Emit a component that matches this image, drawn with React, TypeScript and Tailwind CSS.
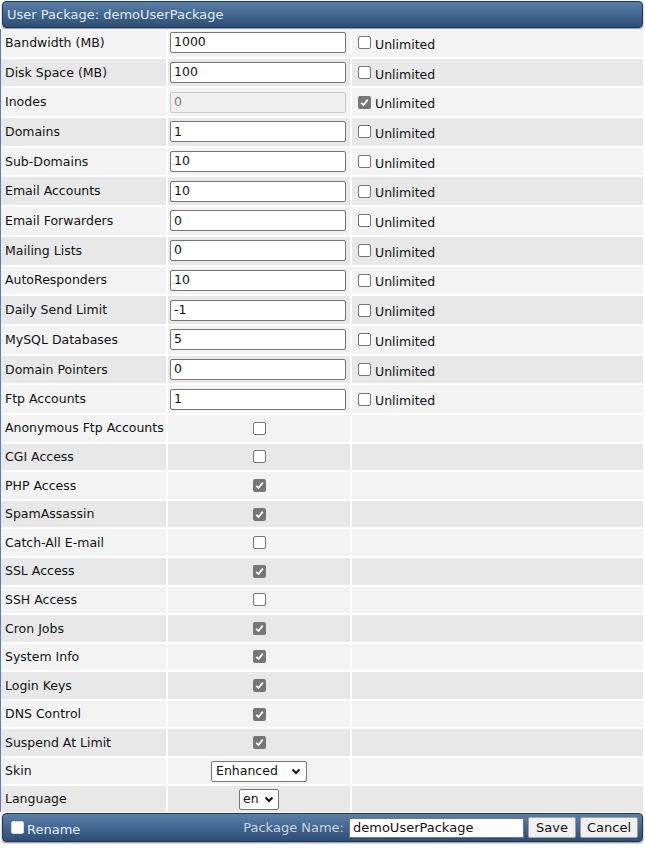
import React from 'react';

const limits: { label: string; value: string; unlimited?: boolean }[] = [
  { label: 'Bandwidth (MB)', value: '1000' },
  { label: 'Disk Space (MB)', value: '100' },
  { label: 'Inodes', value: '0', unlimited: true },
  { label: 'Domains', value: '1' },
  { label: 'Sub-Domains', value: '10' },
  { label: 'Email Accounts', value: '10' },
  { label: 'Email Forwarders', value: '0' },
  { label: 'Mailing Lists', value: '0' },
  { label: 'AutoResponders', value: '10' },
  { label: 'Daily Send Limit', value: '-1' },
  { label: 'MySQL Databases', value: '5' },
  { label: 'Domain Pointers', value: '0' },
  { label: 'Ftp Accounts', value: '1' },
];

const flags: [string, boolean][] = [
  ['Anonymous Ftp Accounts', false],
  ['CGI Access', false],
  ['PHP Access', true],
  ['SpamAssassin', true],
  ['Catch-All E-mail', false],
  ['SSL Access', true],
  ['SSH Access', false],
  ['Cron Jobs', true],
  ['System Info', true],
  ['Login Keys', true],
  ['DNS Control', true],
  ['Suspend At Limit', true],
];

const Box = ({ checked, dark }: { checked?: boolean; dark?: boolean }) =>
  checked ? (
    <span className="inline-flex w-[13px] h-[13px] rounded-[2px] bg-[#767676] items-center justify-center shrink-0">
      <svg width="9" height="9" viewBox="0 0 9 9">
        <path d="M1.2 4.8 L3.5 7 L7.8 1.6" fill="none" stroke="#fff" strokeWidth="1.8" />
      </svg>
    </span>
  ) : (
    <span
      className={`inline-block w-[13px] h-[13px] rounded-[2px] border shrink-0 ${
        dark ? 'border-[#cfd8e2] bg-white' : 'border-[#767676] bg-white'
      }`}
    />
  );

const Chevron = () => (
  <svg width="10" height="7" viewBox="0 0 10 7">
    <path d="M1.5 1.5 L5 5 L8.5 1.5" fill="none" stroke="#111" strokeWidth="2" />
  </svg>
);

export default function App() {
  const rowBg = (i: number) => (i % 2 === 0 ? 'bg-[#f3f3f3]' : 'bg-[#e8e8e8]');

  return (
    <div className="w-[645px] h-[852px] bg-white text-[12.5px] text-[#111] pt-[1px]" style={{ fontFamily: '"DejaVu Sans", Verdana, sans-serif' }}>
      <div className="mx-[2px] h-[27px] rounded-[4px] border border-[#1e3857] bg-gradient-to-b from-[#5a80aa] to-[#2c4e76] shadow-[0_1px_2px_rgba(0,0,0,0.5)] flex items-center px-[4px] text-[#e2eaf3] text-[13px]">
        User Package: demoUserPackage
      </div>

      <div className="border-l border-[#5b7fae] mt-[1px] mr-[2px] grid grid-cols-[165px_182px_1fr] gap-[2px]">
        {limits.map((r, i) => (
          <React.Fragment key={r.label}>
            <div className={`${rowBg(i)} h-[27.7px] flex items-center pl-[4px] pt-[1px]`}>{r.label}</div>
            <div className={`${rowBg(i)} flex items-center pl-[2px]`}>
              <div
                className={`w-[176px] h-[21px] rounded-[2px] border flex items-center px-[3px] ${
                  r.unlimited ? 'bg-[#f0f0f0] border-[#c8c8c8] text-[#808080]' : 'bg-white border-[#767676]'
                }`}
              >
                {r.value}
              </div>
            </div>
            <div className={`${rowBg(i)} flex items-center pl-[6px] gap-[4px]`}>
              <Box checked={r.unlimited} />
              <span className="mt-[5px]">Unlimited</span>
            </div>
          </React.Fragment>
        ))}
        {flags.map(([label, on], j) => (
          <React.Fragment key={label}>
            <div className={`${rowBg(j)} h-[26.6px] flex items-center pl-[4px] pt-[1px]`}>{label}</div>
            <div className={`${rowBg(j)} flex items-center justify-center`}>
              <Box checked={on} />
            </div>
            <div className={rowBg(j)} />
          </React.Fragment>
        ))}
        <div className={`${rowBg(0)} h-[26px] flex items-center pl-[4px] pt-[1px]`}>Skin</div>
        <div className={`${rowBg(0)} flex items-center justify-center`}>
          <div className="w-[96px] h-[21px] bg-white border border-[#767676] rounded-[2px] flex items-center justify-between pl-[4px] pr-[5px]">
            <span>Enhanced</span>
            <Chevron />
          </div>
        </div>
        <div className={rowBg(0)} />
        <div className={`${rowBg(1)} h-[26px] flex items-center pl-[4px] pt-[1px]`}>Language</div>
        <div className={`${rowBg(1)} flex items-center justify-center`}>
          <div className="w-[40px] h-[21px] bg-white border border-[#767676] rounded-[2px] flex items-center justify-between pl-[3px] pr-[4px]">
            <span>en</span>
            <Chevron />
          </div>
        </div>
        <div className={rowBg(1)} />
      </div>

      <div className="mx-[2px] mt-[1px] h-[29px] rounded-[4px] border border-[#1e3857] bg-gradient-to-b from-[#5a80aa] to-[#2c4e76] shadow-[0_1px_2px_rgba(0,0,0,0.5)] flex items-center pl-[8px] pr-[4px] text-[13px]">
        <Box dark />
        <span className="ml-[3px] mt-[4px] text-[#e8eef5]">Rename</span>
        <span className="ml-auto text-[#c9d3de]">Package Name:</span>
        <div className="ml-[5px] w-[175px] h-[20px] bg-white border border-[#767676] flex items-center px-[3px] text-[#111]">demoUserPackage</div>
        <button className="ml-[4px] w-[48px] h-[21px] bg-[#f0f0f0] border border-[#a0a0a0] rounded-[2px] text-[#111]">Save</button>
        <button className="ml-[4px] w-[58px] h-[21px] bg-[#f0f0f0] border border-[#a0a0a0] rounded-[2px] text-[#111]">Cancel</button>
      </div>
    </div>
  );
}
